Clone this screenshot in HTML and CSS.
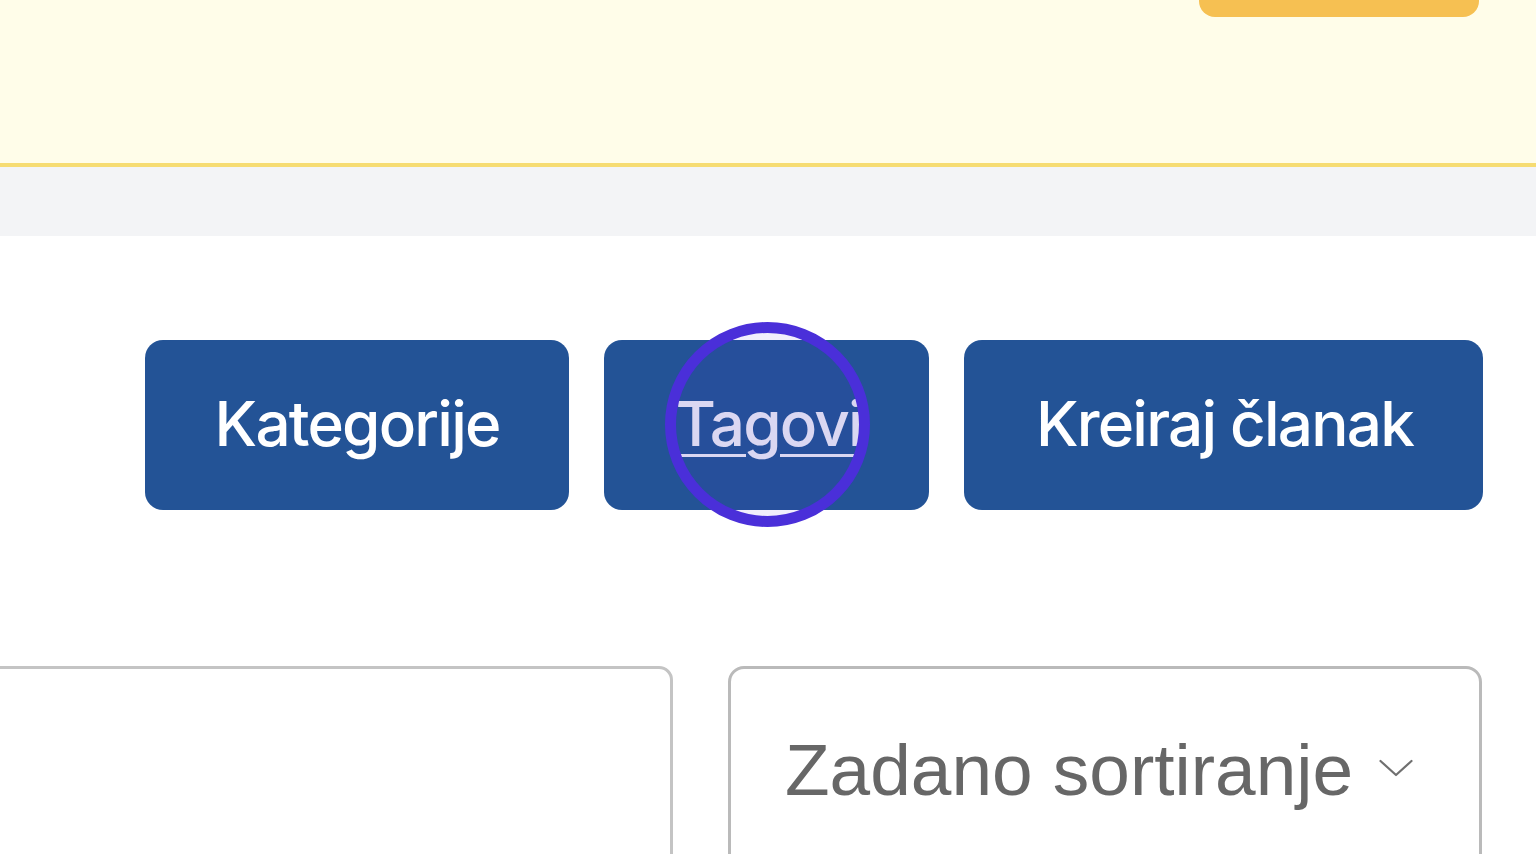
FILE: index.html
```html
<!DOCTYPE html>
<html lang="hr">
<head>
<meta charset="utf-8">
<title>Članci</title>
<link rel="stylesheet" href="styles.css">
</head>
<body>
<header class="banner">
  <a class="banner-btn" href="#" aria-label="Nadogradi"></a>
</header>
<div class="strip"></div>
<main class="content">
  <div class="toolbar">
    <a class="btn" href="#">Kategorije</a>
    <a class="btn btn-hover" href="#">Tagovi<span class="ring"></span></a>
    <a class="btn btn-wide" href="#">Kreiraj članak</a>
  </div>
  <div class="filters">
    <div class="search"></div>
    <div class="select">
      <span class="select-label">Zadano sortiranje</span>
      <svg class="chev" viewBox="0 0 34 24" width="34" height="24"><path d="M1.5 6 L17 20 L32.5 6" fill="none" stroke="#707070" stroke-width="2.2" stroke-linecap="round" stroke-linejoin="round"/></svg>
    </div>
  </div>
</main>
</body>
</html>
```
FILE: styles.css
```css
* { box-sizing: border-box; }
html, body { margin: 0; padding: 0; }
body {
  background: #ffffff;
  font-family: Inter, "Noto Sans", sans-serif;
  width: 1536px;
  height: 854px;
  overflow: hidden;
}
.banner {
  height: 167px;
  background: #fffde9;
  border-bottom: 4px solid #f6dc72;
  display: flex;
  justify-content: flex-end;
  align-items: flex-start;
  padding: 0 57px 0 230px;
}
.banner-btn {
  display: block;
  margin-top: -60px;
  width: 280px;
  height: 77px;
  border-radius: 16px;
  background: #f6c052;
}
.strip {
  height: 69px;
  background: #f3f4f6;
}
.content {
  padding-top: 104px;
}
.toolbar {
  display: flex;
  justify-content: flex-end;
  gap: 35px;
  padding-right: 53px;
}
.btn {
  position: relative;
  display: flex;
  align-items: center;
  justify-content: center;
  height: 170px;
  padding: 0 69px 4px 70px;
  border-radius: 18px;
  background: #235396;
  color: #ffffff;
  font-size: 62px;
  letter-spacing: -1.8px;
  font-weight: 500;
  text-decoration: none;
  white-space: nowrap;
}
.btn-hover {
  color: #e6e6f5;
  text-decoration: underline;
  text-decoration-thickness: 3px;
  text-underline-offset: 8px;
  padding-left: 72px;
  padding-right: 67px;
}
.btn-wide {
  padding-left: 72px;
  padding-right: 70px;
}
.ring {
  position: absolute;
  left: calc(50% - 101px);
  top: calc(50% - 103px);
  width: 205px;
  height: 205px;
  border-radius: 50%;
  border: 11px solid #4a2fd9;
  background: rgba(80, 40, 220, 0.08);
}
.filters {
  display: flex;
  gap: 55px;
  margin-top: 156px;
  padding-right: 54px;
}
.search {
  flex: 0 0 auto;
  width: 700px;
  margin-left: -27px;
  height: 240px;
  border: 3px solid #c4c4c4;
  border-radius: 14px;
  background: #fff;
}
.select {
  flex: 1;
  height: 240px;
  border: 3px solid #bababa;
  border-radius: 16px;
  display: flex;
  align-items: flex-start;
  padding: 59px 0 0 54px;
  gap: 26px;
}
.select-label {
  font-family: "Liberation Sans", Arial, sans-serif;
  font-size: 73px;
  line-height: 84px;
  color: #676767;
  white-space: nowrap;
}
.chev {
  margin-top: 27px;
}
```
